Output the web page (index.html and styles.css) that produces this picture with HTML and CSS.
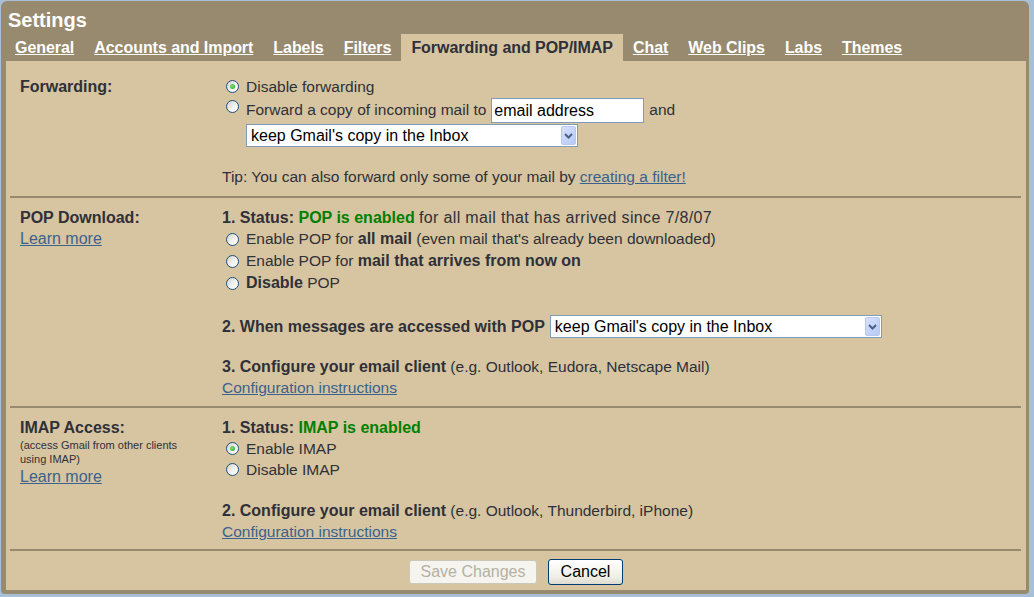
FILE: index.html
```html
<!DOCTYPE html>
<html>
<head>
<meta charset="utf-8">
<title>Settings</title>
<link rel="stylesheet" href="styles.css">
</head>
<body>
<div class="frame">
  <div class="title">Settings</div>
  <div class="tabs">
    <a class="tab" href="#">General</a>
    <a class="tab" href="#">Accounts and Import</a>
    <a class="tab" href="#">Labels</a>
    <a class="tab" href="#">Filters</a>
    <span class="tab active">Forwarding and POP/IMAP</span>
    <a class="tab" href="#">Chat</a>
    <a class="tab" href="#">Web Clips</a>
    <a class="tab" href="#">Labs</a>
    <a class="tab" href="#">Themes</a>
  </div>
  <div class="panel">
    <div class="section sec-fwd">
      <div class="label">
        <div class="lbl">Forwarding:</div>
      </div>
      <div class="value">
        <div class="opt"><span class="radio on"></span>Disable forwarding</div>
        <div class="opt opt-input"><span class="radio top"></span>Forward a copy of incoming mail to <span class="textbox">email address</span> and</div>
        <div class="selrow indent">
          <span class="select">keep Gmail's copy in the Inbox<span class="arrow"><svg width="9" height="6" viewBox="0 0 9 6"><path d="M1 1 L4.5 4.5 L8 1" fill="none" stroke="#4d6185" stroke-width="2"/></svg></span></span>
        </div>
        <div class="line tip">Tip: You can also forward only some of your mail by <a href="#">creating a filter!</a></div>
      </div>
    </div>
    <div class="sep"></div>
    <div class="section sec-pop">
      <div class="label">
        <div class="lbl">POP Download:</div>
        <div class="learn"><a href="#">Learn more</a></div>
      </div>
      <div class="value">
        <div class="line"><b>1. Status: <span class="green">POP is enabled</span></b> <span class="since">for all mail that has arrived since 7/8/07</span></div>
        <div class="opt opt22"><span class="radio"></span>Enable POP for&nbsp;<b>all mail</b>&nbsp;(even mail that's already been downloaded)</div>
        <div class="opt opt22"><span class="radio"></span>Enable POP for&nbsp;<b>mail that arrives from now on</b></div>
        <div class="opt opt22"><span class="radio"></span><b>Disable</b>&nbsp;POP</div>
        <div class="selrow step2"><b>2. When messages are accessed with POP</b>
          <span class="select sel-pop">keep Gmail's copy in the Inbox<span class="arrow"><svg width="9" height="6" viewBox="0 0 9 6"><path d="M1 1 L4.5 4.5 L8 1" fill="none" stroke="#4d6185" stroke-width="2"/></svg></span></span>
        </div>
        <div class="line step3"><b>3. Configure your email client</b> (e.g. Outlook, Eudora, Netscape Mail)</div>
        <div class="line"><a href="#">Configuration instructions</a></div>
      </div>
    </div>
    <div class="sep"></div>
    <div class="section sec-imap">
      <div class="label">
        <div class="lbl">IMAP Access:</div>
        <div class="small">(access Gmail from other clients<br>using IMAP)</div>
        <div class="learn2"><a href="#">Learn more</a></div>
      </div>
      <div class="value">
        <div class="line"><b>1. Status: <span class="green">IMAP is enabled</span></b></div>
        <div class="opt"><span class="radio on"></span>Enable IMAP</div>
        <div class="opt"><span class="radio"></span>Disable IMAP</div>
        <div class="line step3i"><b>2. Configure your email client</b> (e.g. Outlook, Thunderbird, iPhone)</div>
        <div class="line"><a href="#">Configuration instructions</a></div>
      </div>
    </div>
    <div class="sep"></div>
    <div class="buttons">
      <button class="btn btn-disabled" disabled>Save Changes</button>
      <button class="btn btn-cancel">Cancel</button>
    </div>
  </div>
</div>
</body>
</html>
```
FILE: styles.css
```css
html, body {
  margin: 0;
  padding: 0;
}
body {
  background: #a7bfd7;
  font-family: "Liberation Sans", Arial, sans-serif;
  font-size: 16px;
  color: #2f3039;
  width: 1034px;
  height: 597px;
  overflow: hidden;
}
.frame {
  margin: 1px 5px 0 1px;
  height: 593px;
  box-sizing: border-box;
  background: #978a6e;
  border-radius: 6px 6px 4px 4px;
  padding: 0 3px 4px 5px;
  display: flex;
  flex-direction: column;
}
.title {
  color: #fff;
  font-weight: bold;
  font-size: 20px;
  line-height: 24px;
  padding: 7px 0 2px 2px;
}
.tabs {
  display: flex;
  height: 27px;
  margin-left: -1px;
}
.tab {
  padding: 0 10px;
  line-height: 27px;
  font-weight: bold;
  color: #fff;
  text-decoration: underline;
  white-space: nowrap;
  letter-spacing: -0.05px;
}
.tab.active {
  background: #d6c5a0;
  color: #2f3039;
  text-decoration: none;
}
.panel {
  flex: 1;
  background: #d6c5a0;
  display: flex;
  flex-direction: column;
}
.section {
  display: grid;
  grid-template-columns: 202px 1fr;
  padding-left: 14px;
}
.sec-fwd { padding-top: 15px; padding-bottom: 9px; }
.sec-pop { padding-top: 9px; padding-bottom: 8px; }
.sec-imap { padding-top: 9px; padding-bottom: 7px; }
.value {
  font-size: 15.5px;
}
.value b {
  font-size: 16px;
}
.lbl {
  font-weight: bold;
  line-height: 21px;
  white-space: nowrap;
}
.learn { line-height: 22px; }
.learn2 { line-height: 21px; }
.small {
  font-size: 11px;
  line-height: 14px;
}
a {
  color: #3a6290;
  text-decoration: underline;
}
.line {
  line-height: 21px;
  white-space: nowrap;
}
.since {
  font-size: 16px;
  letter-spacing: 0.35px;
}
.green { color: #008000; }
.opt {
  display: flex;
  align-items: center;
  height: 21px;
  white-space: nowrap;
}
.opt22 { height: 22px; }
.opt-input {
  height: 26px;
}
.radio {
  width: 13px;
  height: 13px;
  box-sizing: border-box;
  border-radius: 50%;
  border: 1px solid #1c5180;
  background: linear-gradient(135deg, #d4d3cc 0%, #f2f2ee 55%, #ffffff 100%);
  margin: 0 7px 0 4px;
  position: relative;
  flex: none;
}
.radio.top {
  align-self: flex-start;
  margin-top: 3px;
}
.radio.on::after {
  content: "";
  position: absolute;
  left: 3px;
  top: 3px;
  width: 5px;
  height: 5px;
  border-radius: 50%;
  background: radial-gradient(circle at 40% 40%, #7fe07f, #21a121);
}
.textbox {
  display: inline-block;
  width: 153px;
  height: 25px;
  box-sizing: border-box;
  border: 1px solid #7f9db9;
  background: #fff;
  color: #000;
  font-size: 16px;
  line-height: 23px;
  padding-left: 2px;
  margin: 1px 5px 0 5px;
}
.selrow {
  display: flex;
  align-items: center;
  height: 23px;
  white-space: nowrap;
}
.indent {
  margin-top: 1px;
  padding-left: 24px;
}
.select {
  display: flex;
  align-items: center;
  width: 332px;
  height: 23px;
  box-sizing: border-box;
  border: 1px solid #7f9db9;
  background: #fff;
  color: #000;
  font-size: 16px;
  padding: 1px 1px 1px 4px;
  justify-content: space-between;
}
.sel-pop { margin-left: 5px; }
.arrow {
  width: 15px;
  height: 19px;
  box-sizing: border-box;
  border: 1px solid #b8c9ef;
  border-radius: 2px;
  background: linear-gradient(135deg, #d6e2fd, #b6c9f6);
  display: flex;
  align-items: center;
  justify-content: center;
}
.tip { margin-top: 19px; }
.step2 { margin-top: 21px; }
.step3 { margin-top: 18px; }
.step3i { margin-top: 20px; }
.sep {
  height: 2px;
  background: #978a6e;
  margin: 0 5px 0 4px;
}
.buttons {
  display: flex;
  justify-content: center;
  align-items: center;
  gap: 11px;
  padding-top: 8px;
  height: 26px;
}
.btn {
  font-family: "Liberation Sans", Arial, sans-serif;
  font-size: 16px;
  border-radius: 3px;
  box-sizing: border-box;
  padding: 0;
}
.btn-disabled {
  width: 128px;
  height: 24px;
  background: #f5f4ee;
  border: 1px solid #cbc8bb;
  color: #b4b1a4;
}
.btn-cancel {
  width: 75px;
  height: 26px;
  background: linear-gradient(#ffffff, #f0efe6 70%, #dedbcf);
  border: 1px solid #003c74;
  color: #000;
}
```
